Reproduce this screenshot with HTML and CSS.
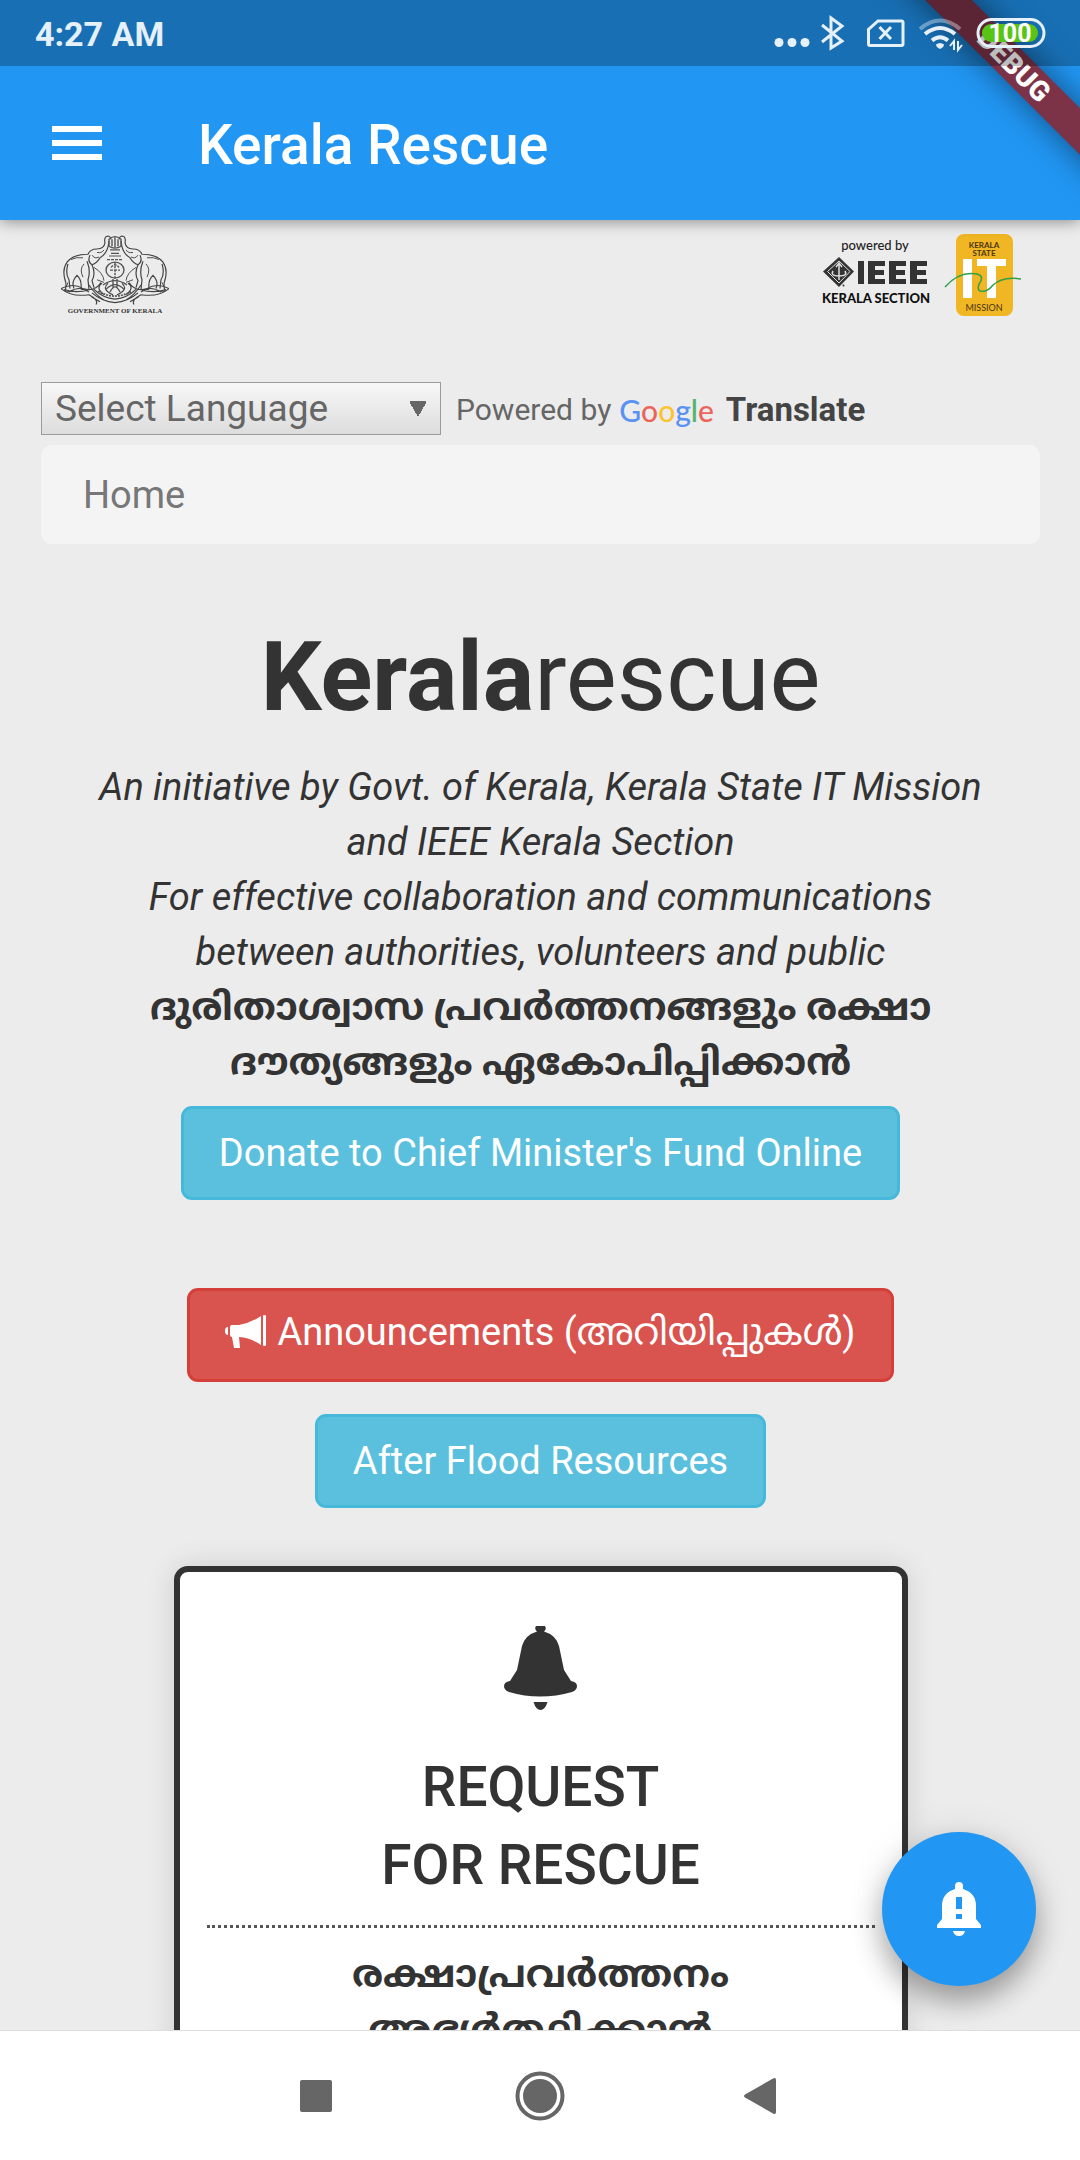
FILE: index.html
```html
<!DOCTYPE html>
<html lang="en">
<head>
<meta charset="utf-8">
<meta name="viewport" content="width=device-width, initial-scale=1">
<title>Kerala Rescue</title>
<link rel="stylesheet" href="styles.css">
</head>
<body>
<div class="screen">
  <header class="top">
    <div class="app-bar">
      <button class="menu" type="button" aria-label="Open menu"><svg viewBox="0 0 50 34" width="50" height="34"><path d="M0 0h50v6H0zM0 14h50v6H0zM0 28h50v6H0z" fill="#fff"/></svg></button>
      <h1 class="app-title">Kerala Rescue</h1>
    </div>
    <div class="ribbon-corner"><span class="ribbon">DEBUG</span></div>
    <div class="status">
      <span class="clock">4:27 AM</span>
      <svg class="status-icons" viewBox="0 0 276 66" width="276" height="66" role="img" aria-label="Battery 100">
        <g fill="#e6f0f9"><circle cx="8" cy="42.500" r="4.500"/><circle cx="21" cy="42.500" r="4.500"/><circle cx="34" cy="42.500" r="4.500"/></g>
        <g fill="none" stroke="#e6f0f9" stroke-width="3">
          <path d="M51 25L71 41L60 48V18L71 26L51 42"/>
          <path d="M107 21H130.500Q132 21 132 22.500V44Q132 45.500 130.500 45.500H99Q97.500 45.500 97.500 44V29.500Z"/>
          <path d="M108.500 27L120 39M120 27L108.500 39"/>
          <path d="M149 29Q169 12 189 29" stroke-width="4" opacity=".4"/>
          <path d="M154 34Q169 22 184 34M161 40.500Q169 34 177 40.500" stroke-width="4"/>
          <path d="M183 50V41l-4 5M187 41v9l4-5" stroke-width="2"/>
          <rect x="207" y="19.500" width="66" height="27" rx="13.500"/>
        </g>
        <path d="M165 44.500Q169 41.500 173 44.500Q173 47 169 49Q165 47 165 44.500Z" fill="#e6f0f9"/>
        <rect x="211" y="24" width="56" height="18" rx="9" fill="#58c516"/>
        <text class="battery" x="239" y="42" text-anchor="middle">100</text>
      </svg>
    </div>
  </header>

  <main class="page">
    <div class="logos">
      <svg class="emblem" viewBox="0 0 108 82" width="108" height="82" role="img" aria-label="Government of Kerala">
        <defs>
          <g id="elephant" fill="none" stroke="#444" stroke-width="1.200">
            <path d="M50 6Q49 1 45 3Q43 5 44 10Q43 17 36 17Q29 17 27 23Q12 23 6 32Q1 40 4 52Q6 58 4 65"/>
            <path d="M48 8Q47 22 39 27Q36 33 31 35Q26 31 29 24M31 35Q35 45 31 53L33 61M26 31Q30 42 27 52L28 63M20 62Q21 52 16 47Q10 54 13 62M7 34Q4 45 8 52L9 62M4 65H13M20 63H31"/>
            <path d="M36 21Q41 22 43 18M31 24Q34 29 38 26M33 38Q42 44 43 53M36 52L43 55M10 29Q15 26 22 27M22 49Q18 40 23 34M7 55L5 60" stroke-width="1"/>
            <path d="M0 62Q12 55 22 62Q34 66 40 55M0 62Q10 72 28 69Q38 75 35 80M3 63Q15 68 29 63M28 58Q35 70 43 75M8 66Q19 58 28 66M41 56Q34 61 43 69M47 56Q40 63 52 69M30 71L39 77M33 63Q42 73 54 74M31 67Q41 77 54 78"/>
          </g>
        </defs>
        <g transform="scale(1 .88)">
          <use href="#elephant"/>
          <use href="#elephant" transform="translate(108 0) scale(-1 1)"/>
          <g fill="none" stroke="#555" stroke-width="1.400">
            <path d="M48 6Q54 0 60 6V14Q54 18 48 14ZM51 6v8M54 4v11M57 6v8M49 18H59M50 22H58M48 25H60"/>
            <path d="M46 29H62M54 32V51M50 38Q54 32 58 38M49 41H59" stroke-dasharray="3 1"/>
            <circle cx="54" cy="41" r="9"/>
            <path d="M42 58Q54 48 66 58M45 63Q54 52 63 63M49 66Q54 54 59 66M52 51V62M56 51V62"/>
            <path d="M37 65Q54 76 71 65" stroke-width="2" stroke-dasharray="2 1"/>
          </g>
        </g>
        <text class="emblem-name" x="54" y="79" text-anchor="middle">GOVERNMENT OF KERALA</text>
      </svg>
      <svg class="partners" viewBox="0 0 200 84" width="200" height="84" role="img" aria-label="Powered by IEEE Kerala Section and Kerala State IT Mission">
        <text class="powered" x="53" y="17" text-anchor="middle">powered by</text>
        <path d="M17 24L32 38.500L17 54L1 38.500Z" fill="#333"/>
        <path d="M17 28L28 38.500L17 50L5.500 38.500Z" fill="none" stroke="#ddd" stroke-width="1"/>
        <path d="M17 31v16M14 34l3-4 3 4M11 38q-3 5 6 5q9 0 6-5" fill="none" stroke="#ddd" stroke-width="1.500"/>
        <circle cx="21.500" cy="52.500" r="1" fill="#333"/>
        <path d="M36 28h6v23h-6zM46 28h17v5H53v4h9v5h-9v4h10v5H46zM67 28h17v5H74v4h9v5h-9v4h10v5H67zM88 28h17v5H95v4h9v5h-9v4h10v5H88z" fill="#333"/>
        <text class="section" x="54" y="70" text-anchor="middle">KERALA SECTION</text>
        <rect x="134" y="1" width="57" height="82" rx="8" fill="#f0b623"/>
        <text class="it-small" x="162" y="15" text-anchor="middle">KERALA</text>
        <text class="it-small" x="162" y="23" text-anchor="middle">STATE</text>
        <path d="M141 26h9v39h-9zM155 26h29v7h-10v32h-9V33h-10z" fill="#fff"/>
        <path d="M123 54Q137 38 155 41Q163 43 157 51Q154 60 163 58Q167 57 171 52Q181 43 199 46" fill="none" stroke="#30a04a" stroke-width="1.500"/>
        <text class="it-mission" x="162" y="78" text-anchor="middle">MISSION</text>
      </svg>
    </div>

    <div class="translate">
      <select class="language" aria-label="Select Language"><option>Select Language</option></select>
      <span class="by">Powered by</span>
      <a class="google" href="#"><span class="wordmark"><i class="b">G</i><i class="r">o</i><i class="y">o</i><i class="b">g</i><i class="g">l</i><i class="r">e</i></span> Translate</a>
    </div>

    <nav class="crumbs"><a href="#">Home</a></nav>

    <section class="intro">
      <h2 class="brand"><b>Kerala</b>rescue</h2>
      <p class="lead"><em>An initiative by Govt. of Kerala, Kerala State IT Mission<br>and IEEE Kerala Section<br>For effective collaboration and communications<br>between authorities, volunteers and public</em><br>
      <strong lang="ml">ദുരിതാശ്വാസ പ്രവർത്തനങ്ങളും രക്ഷാ<br>ദൗത്യങ്ങളും ഏകോപിപ്പിക്കാൻ</strong></p>
    </section>

    <div class="actions">
      <a class="btn info donate" href="#">Donate to Chief Minister's Fund Online</a>
      <a class="btn danger" href="#"><svg class="horn" viewBox="0 0 42 34" width="42" height="34" fill="#fff"><path d="M3 12v8Q0 20 0 16T3 12ZM7 10H14Q26 8 36 1V30Q26 23 14 22L15 33H9L7 22Q5 22 5 20V12Q5 10 7 10ZM38 1Q38 0 39.500 0T41 1V30Q41 31 39.500 31T38 30Z"/></svg><span>Announcements (<span lang="ml">അറിയിപ്പുകൾ</span>)</span></a>
      <a class="btn info" href="#">After Flood Resources</a>
    </div>

    <a class="card" href="#">
      <svg class="bell" viewBox="0 0 73 84" width="73" height="84" fill="#333"><path d="M32 0h9q2 3-1 5.500Q52 9 55 20L60 44L67 55Q73 56 73 60Q73 64 68 66Q36 75 5 66Q0 64 0 60Q0 56 6 55L13 44L18 20Q21 9 33 5.500Q30 3 32 0ZM29.500 76h14Q41 84 36.500 84T29.500 76Z"/></svg>
      <h3 class="card-title">REQUEST<br>FOR RESCUE</h3>
      <p class="card-text" lang="ml">രക്ഷാപ്രവർത്തനം<br>അഭ്യർത്ഥിക്കാൻ</p>
    </a>
  </main>

  <button class="fab" type="button" aria-label="Alerts"><svg viewBox="0 0 44 54" width="44" height="54" fill="#fff"><path fill-rule="evenodd" d="M22 0a4 4 0 0 1 4 4v3Q39 11 39 24V37L44 43V46H0V43L5 37V24Q5 11 18 7V4a4 4 0 0 1 4-4ZM19 15v12h6V15ZM19 32v5h6v-5ZM16 49h12q-1 5-6 5t-6-5Z"/></svg></button>

  <nav class="system-nav">
    <button type="button" aria-label="Recent apps"><svg viewBox="0 0 50 50" width="50" height="50"><rect x="10" y="9" width="32" height="32" rx="2" fill="#666"/></svg></button>
    <button type="button" aria-label="Home"><svg viewBox="0 0 50 50" width="50" height="50"><circle cx="25" cy="25" r="22.500" fill="none" stroke="#666" stroke-width="4"/><circle cx="25" cy="25" r="17" fill="#666"/></svg></button>
    <button type="button" aria-label="Back"><svg viewBox="0 0 50 50" width="50" height="50"><path d="M5 23.500L33 7.500Q36 6 36 9V41Q36 44 33 42.500L5 26.500Q3 25 5 23.500Z" fill="#666"/></svg></button>
  </nav>
</div>
</body>
</html>
```
FILE: styles.css
```css
* { box-sizing: border-box; }
body { margin: 0; font-family: Roboto, "Noto Sans Malayalam", "Noto Sans", sans-serif; color: #333; background: #ececec; }
a { color: inherit; text-decoration: none; }
button { border: 0; padding: 0; background: none; display: flex; align-items: center; justify-content: center; }
svg { display: block; flex: none; }
h1, h2, h3, p { margin: 0; }

.screen { height: 100vh; display: flex; flex-direction: column; position: relative; }

.top { position: relative; z-index: 1; flex: none; padding-top: 66px; background: #2196f3; box-shadow: 0 2px 14px rgba(0, 0, 0, .4); }
.app-bar { display: flex; align-items: center; gap: 96px; height: 154px; padding: 0 52px; }
.app-title { padding-top: 3px; font-size: 55px; font-weight: 500; color: #fff; }
.status { position: absolute; inset: 0 0 auto; height: 66px; display: flex; justify-content: space-between; align-items: center; padding: 0 33px 0 35px; background: rgba(0, 0, 0, .26); }
.clock { padding-top: 2px; font-size: 34px; font-weight: 700; color: #e6f0f9; }
.battery { font: 700 25px Roboto, sans-serif; fill: #fff; }
.ribbon-corner { position: absolute; top: 0; right: 0; width: 220px; height: 220px; overflow: hidden; pointer-events: none; }
.ribbon { position: absolute; left: 4px; top: 49px; width: 300px; height: 33px; line-height: 33px; text-align: center; transform: rotate(45deg); background: #7c3348; color: #fff; font-size: 28px; font-weight: 900; box-shadow: 0 0 32px rgba(0, 0, 0, .5); }

.page { flex: 1; min-height: 0; overflow: hidden; padding: 12px 40px 0 41px; display: flex; flex-direction: column; }
.logos { display: flex; justify-content: space-between; padding: 0 18px 0 20px; height: 150px; flex: none; }
.emblem { margin-top: 2px; }
.partners { margin-top: 1px; }
.emblem-name { font: 700 7px "Liberation Serif", serif; fill: #333; }
.powered { font: 500 13px Lato, sans-serif; fill: #222; }
.section { font: 900 13px Lato, sans-serif; fill: #111; }
.it-small { font: 700 8px Lato, sans-serif; fill: #4b3510; }
.it-mission { font: 400 9px Lato, sans-serif; fill: #4b3510; }

.translate { display: flex; align-items: center; flex: none; color: #666; }
.language { appearance: none; width: 400px; height: 53px; margin: 0 15px 0 0; padding: 0 13px; border: 1px solid #9b9b9b; border-radius: 0; font: 400 37px Roboto, sans-serif; color: #666; background: conic-gradient(from -30deg at 50% 100%, #666 60deg, transparent 0) right 14px top 18px / 16px 16px no-repeat, linear-gradient(#f7f7f7, #ddd); }
.by { padding-top: 2px; font-size: 30px; }
.google { display: flex; align-items: center; margin-left: 8px; gap: 12px; padding-top: 2px; font-size: 33px; font-weight: 700; color: #444; }
.wordmark { font: 500 30px Lato, sans-serif; }
.wordmark i { font-style: normal; }
.b { color: #5a92f2; }
.r { color: #ec6359; }
.y { color: #f9c52f; }
.g { color: #57b46d; }

.crumbs { flex: none; margin-top: 10px; height: 99px; padding: 0 42px; display: flex; align-items: center; border-radius: 11px; background: #f4f4f4; color: #777; font-size: 38px; }

.intro { flex: none; margin-top: 78px; text-align: center; }
.brand { font-size: 96px; line-height: 110px; font-weight: 400; }
.lead { margin-top: 28px; font-size: 38px; line-height: 55px; }

.actions { flex: none; display: flex; flex-direction: column; align-items: center; gap: 32px; margin-top: 16px; }
.btn { display: flex; align-items: center; gap: 10px; height: 94px; padding: 0 35px; border: 3px solid; border-radius: 11px; color: #fff; font-size: 38px; }
.info { background: #5bc0de; border-color: #46b8da; }
.danger { background: #d9534f; border-color: #d43f3a; }
.donate { margin-bottom: 56px; }
.horn { margin-bottom: 6px; }

.card { flex: none; width: 734px; align-self: center; margin-top: 58px; padding: 54px 27px 40px; border: 6px solid #333; border-radius: 14px; background: #fff; text-align: center; box-shadow: 0 0 30px rgba(0, 0, 0, .12); }
.bell { margin: 0 auto; }
.card-title { margin-top: 38px; padding-bottom: 21px; border-bottom: 3px dotted #555; font-size: 55px; line-height: 78px; font-weight: 500; }
.card-text { margin-top: 19px; font-size: 38px; line-height: 55px; font-weight: 700; }

.fab { position: absolute; right: 44px; bottom: 174px; width: 154px; height: 154px; border-radius: 50%; background: #2196f3; box-shadow: 0 16px 28px rgba(0, 0, 0, .3), 0 3px 40px rgba(0, 0, 0, .1); }

.system-nav { flex: none; height: 130px; display: flex; align-items: center; justify-content: center; gap: 175px; border-top: 1px solid #ddd; background: #fff; }
```
